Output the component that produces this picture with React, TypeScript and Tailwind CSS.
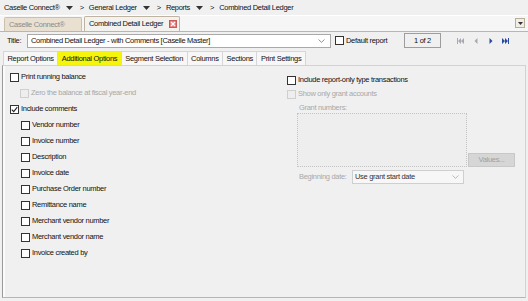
import React from "react";

type BoxProps = { checked?: boolean; disabled?: boolean };

function Box({ checked, disabled }: BoxProps) {
  return (
    <span
      className={`w-[9px] h-[9px] shrink-0 border flex items-center justify-center ${
        disabled ? "border-[#cfcfcf] bg-[#eeeeee]" : "border-[#333333] bg-white"
      }`}
    >
      {checked && (
        <svg width="7" height="7" viewBox="0 0 7 7">
          <path d="M0.8 3.6 L2.7 5.6 L6.3 1.2" fill="none" stroke="#222" strokeWidth="1.1" />
        </svg>
      )}
    </span>
  );
}

function Check({ label, checked, disabled }: { label: string; checked?: boolean; disabled?: boolean }) {
  return (
    <div className="h-[16px] flex items-center gap-[2px]">
      <Box checked={checked} disabled={disabled} />
      <span className={disabled ? "text-[#a8a8a8]" : "text-[#111]"}>{label}</span>
    </div>
  );
}

function Caret() {
  return (
    <svg width="7" height="4" viewBox="0 0 7 4" className="ml-[6px] mr-[7px]">
      <path d="M0 0 L7 0 L3.5 4 Z" fill="#333" />
    </svg>
  );
}

function Chevron({ color = "#777" }: { color?: string }) {
  return (
    <svg width="7" height="4" viewBox="0 0 7 4">
      <path d="M0.5 0.5 L3.5 3.3 L6.5 0.5" fill="none" stroke={color} strokeWidth="0.8" />
    </svg>
  );
}

const tabs = ["Report Options", "Additional Options", "Segment Selection", "Columns", "Sections", "Print Settings"];

const comments = [
  "Vendor number",
  "Invoice number",
  "Description",
  "Invoice date",
  "Purchase Order number",
  "Remittance name",
  "Merchant vendor number",
  "Merchant vendor name",
  "Invoice created by",
];

export default function App() {
  return (
    <div className="w-[528px] h-[301px] overflow-hidden bg-[#f0f0f0] font-['Liberation_Sans',Arial,sans-serif] text-[7.5px] tracking-[-0.3px] text-[#111] flex flex-col whitespace-nowrap">
      {/* breadcrumb */}
      <div className="h-[15px] flex items-center pl-[4px] bg-[#f0f0f0] text-[#111]">
        <span>Caselle Connect®</span>
        <Caret />
        <span className="mr-[5px]">&gt;</span>
        <span>General Ledger</span>
        <Caret />
        <span className="mr-[5px]">&gt;</span>
        <span>Reports</span>
        <Caret />
        <span className="mr-[5px]">&gt;</span>
        <span>Combined Detail Ledger</span>
      </div>

      {/* document tabs */}
      <div className="h-[17px] flex items-end pl-[4px] pr-[3px] bg-[#f6f6f6] border-t border-white border-b border-b-[#c4b498]">
        <div className="h-[14px] w-[78px] flex items-center pl-[4px] bg-[#e9e0d2] border border-b-0 border-[#cbbfae] rounded-t-[2px] text-[#8a8a8a]">
          Caselle Connect®
        </div>
        <div className="h-[15px] w-[96px] ml-[2px] flex items-center pl-[4px] pr-[2px] justify-between bg-[#f4f2ee] border border-b-0 border-[#bfb4a2] rounded-t-[2px]">
          <span>Combined Detail Ledger</span>
          <span className="w-[8px] h-[8px] bg-[#e57a7a] border border-[#c85a5a] flex items-center justify-center">
            <svg width="6" height="6" viewBox="0 0 6 6">
              <path d="M1 1 L5 5 M5 1 L1 5" stroke="#fff" strokeWidth="1.2" />
            </svg>
          </span>
        </div>
        <div className="flex-1" />
        <div className="mb-[3px] w-[10px] h-[10px] border border-[#b8ad98] bg-[#f2eee6] flex items-center justify-center">
          <svg width="5" height="3" viewBox="0 0 5 3">
            <path d="M0 0 L5 0 L2.5 3 Z" fill="#333" />
          </svg>
        </div>
      </div>

      {/* title row */}
      <div className="h-[17px] flex items-center pl-[7px]">
        <span className="w-[20px]">Title:</span>
        <div className="w-[304px] h-[14px] bg-white border border-[#a9a9a9] flex items-center pl-[3px] pr-[5px]">
          <span className="flex-1">Combined Detail Ledger - with Comments [Caselle Master]</span>
          <Chevron />
        </div>
        <div className="ml-[4px] flex items-center gap-[2px] w-[69px]">
          <Box />
          <span>Default report</span>
        </div>
        <div className="w-[37px] h-[15px] border border-[#9d9d9d] bg-[#f0f0f0] flex items-center justify-center">1 of 2</div>
        <div className="flex items-center ml-[16px]">
          <svg width="7" height="6" viewBox="0 0 7 6">
            <path d="M0.5 0 V6" stroke="#a8a8b4" strokeWidth="1" />
            <path d="M4 0 L1 3 L4 6 Z M7 0 L4 3 L7 6 Z" fill="#a8a8b4" />
          </svg>
          <svg width="4" height="6" viewBox="0 0 4 6" className="ml-[10px]">
            <path d="M3.5 0 L0.5 3 L3.5 6 Z" fill="#a8a8b4" />
          </svg>
          <svg width="4" height="6" viewBox="0 0 4 6" className="ml-[11px]">
            <path d="M0.5 0 L3.5 3 L0.5 6 Z" fill="#2a4aa0" />
          </svg>
          <svg width="7" height="6" viewBox="0 0 7 6" className="ml-[9px]">
            <path d="M0 0 L3 3 L0 6 Z M3 0 L6 3 L3 6 Z" fill="#2a4aa0" />
            <path d="M6.5 0 V6" stroke="#2a4aa0" strokeWidth="1" />
          </svg>
        </div>
      </div>

      {/* option tabs */}
      <div className="h-[15px] mt-[1px] flex items-end pl-[3px]">
        {tabs.map((t) => (
          <div
            key={t}
            className={`h-[14px] px-[3.5px] flex items-center border border-b-0 border-[#d6d6d6] -mr-px ${
              t === "Additional Options" ? "bg-[#f5f50c] text-[#111]" : "bg-[#f7f7f7] text-[#111]"
            }`}
          >
            {t}
          </div>
        ))}
      </div>

      {/* content panel */}
      <div className="flex-1 mx-[2px] mb-[3px] border border-l-[#9a9a9a] border-[#d2d2d2] border-b-[#b5b5b5] bg-[#f0f0f0] flex">
        <div className="w-[283px] pl-[5px] pt-[3px] border-l-2 border-l-[#fafafa]">
          <Check label="Print running balance" />
          <div className="pl-[10px]">
            <Check label="Zero the balance at fiscal year-end" disabled />
          </div>
          <Check label="Include comments" checked />
          <div className="pl-[11px]">
            {comments.map((c) => (
              <Check key={c} label={c} />
            ))}
          </div>
        </div>
        <div className="flex-1 pt-[6px] pl-[1px]">
          <Check label="Include report-only type transactions" />
          <div className="-mt-[2px]">
            <Check label="Show only grant accounts" disabled />
          </div>
          <div className="pl-[12px] text-[#a8a8a8] h-[11px] flex items-center">Grant numbers:</div>
          <div className="pl-[10px] flex items-end">
            <div className="w-[170px] h-[54px] border border-dotted border-[#c4c4c4] bg-[#eeeeee]" />
            <div className="w-[47px] h-[14px] ml-[1px] bg-[#d6d6d6] border border-[#c8c8c8] text-[#a0a0a0] flex items-center justify-center">
              Values...
            </div>
          </div>
          <div className="pl-[12px] mt-[3px] flex items-center">
            <span className="w-[53px] text-[#a8a8a8]">Beginning date:</span>
            <div className="w-[112px] h-[14px] bg-[#f7f7f7] border border-[#cfcfcf] flex items-center pl-[2px] pr-[4px]">
              <span className="flex-1 text-[#333]">Use grant start date</span>
              <Chevron color="#aaa" />
            </div>
          </div>
        </div>
      </div>
    </div>
  );
}
